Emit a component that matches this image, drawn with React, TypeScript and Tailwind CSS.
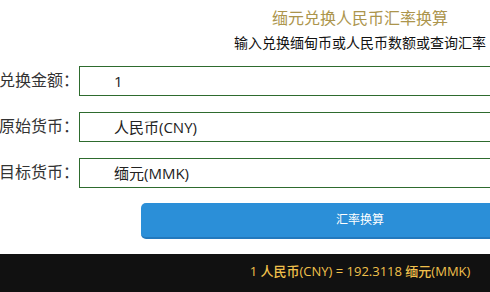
import React from "react";

const font = { fontFamily: '"Open Sans", "Noto Sans CJK SC", sans-serif' };

function Row({ label, value }: { label: string; value: string }) {
  return (
    <div className="flex items-center">
      <div className="w-[79px] flex justify-end text-[16px] leading-[22px] text-[#333] mt-[-3px]">
        <span className="shrink-0 whitespace-nowrap">{label}</span>
      </div>
      <div className="w-[562px] h-[30px] border border-[#2e6b2e] flex items-center pl-[34px] text-[15px] text-[#222]">
        {value}
      </div>
    </div>
  );
}

export default function App() {
  return (
    <div className="w-full h-[292px] overflow-hidden bg-white" style={font}>
      <div className="w-[720px] flex flex-col">
        <div className="pt-[6px] text-center text-[16px] leading-[24px] text-[#ac954c]">
          缅元兑换人民币汇率换算
        </div>
        <div className="mt-[2px] text-center text-[14px] leading-[22px] text-[#111]">
          输入兑换缅甸币或人民币数额或查询汇率
        </div>
        <div className="mt-[12px] flex flex-col gap-[16px]">
          <Row label="兑换金额：" value="1" />
          <Row label="原始货币：" value="人民币(CNY)" />
          <Row label="目标货币：" value="缅元(MMK)" />
        </div>
        <div className="mt-[15px] ml-[141px] w-[438px] h-[36px] rounded-[5px] bg-[#2b8fd8] border-b-2 border-[#2379bd] flex items-center justify-center text-[12px] text-white">
          汇率换算
        </div>
        <div className="mt-[15px] h-[38px] bg-[#111111] flex items-center justify-center text-[13px] font-medium text-[#f0c04c] pb-[2px]">
          1 人民币(CNY) = 192.3118 缅元(MMK)
        </div>
      </div>
    </div>
  );
}
